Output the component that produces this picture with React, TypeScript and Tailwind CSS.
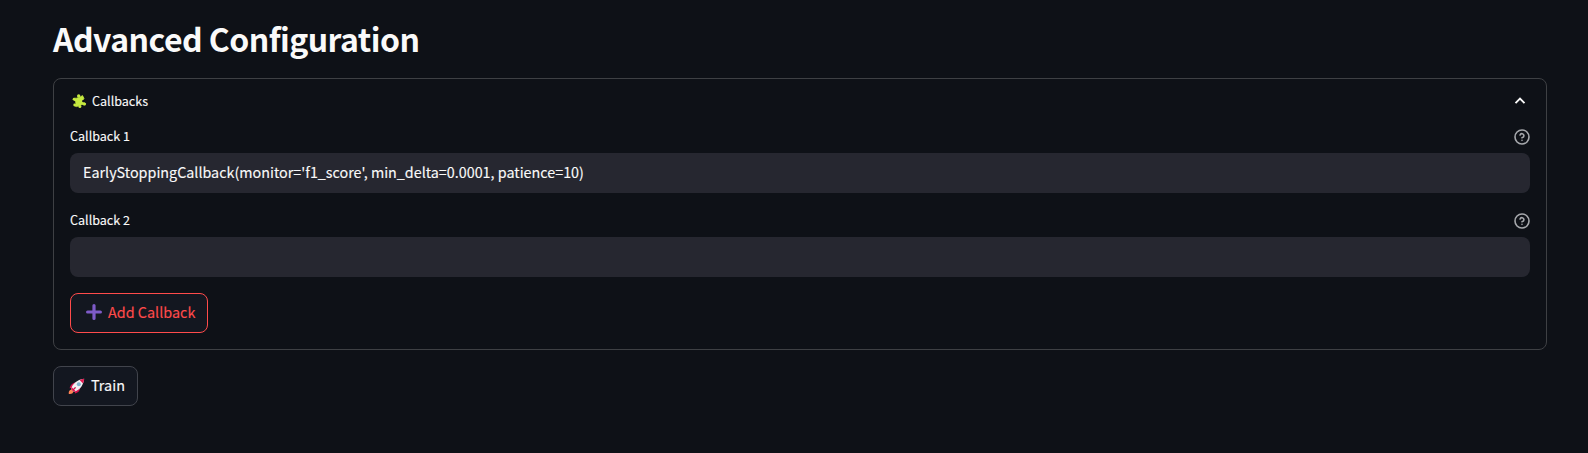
import { useState } from "react";

const FONT = "font-['Noto_Sans_CJK_SC','Noto_Sans',sans-serif]";

function PuzzleIcon() {
  return (
    <svg width="16" height="16" viewBox="0 0 16 16" className="shrink-0" aria-hidden="true">
      <g fill="#c5e93f">
        <path d="M8.800 4.300 11.500 2.600 13 5.400 11.600 7.400 12.200 9.200 14.500 10.600 13.600 12 11 11.400 9.600 12.300 5.400 13.600 4 13 5 10.800 4.200 9.200 2.600 5.200 5.400 5.200 7 4.800Z" stroke="#c5e93f" strokeWidth=".8" strokeLinejoin="round" />
        <circle cx="7.700" cy="2.900" r="1.700" />
        <circle cx="2.900" cy="6.200" r="1.200" />
        <circle cx="3.700" cy="12" r="1.400" />
        <circle cx="8.900" cy="13.500" r="1.500" />
        <circle cx="13.500" cy="11" r="1.500" />
      </g>
      <circle cx="12.200" cy="8.200" r="1.100" fill="#0e1117" />
      <circle cx="3.300" cy="9" r="1.100" fill="#0e1117" />
    </svg>
  );
}

function PlusIcon() {
  return (
    <svg width="16" height="16" viewBox="0 0 16 16" className="shrink-0" aria-hidden="true">
      <path d="M8 1.600v12.800M1.600 8h12.800" stroke="#7e5bc8" strokeWidth="3.200" strokeLinecap="round" />
    </svg>
  );
}

function RocketIcon() {
  return (
    <svg width="17" height="17" viewBox="0 0 17 17" className="shrink-0" aria-hidden="true">
      <path d="M.8 16c-.4-2.200.5-3.900 2.700-4.400l2 2C5 15.600 3.200 16.400.8 16Z" fill="#ff8253" />
      <path d="M7.600 4.600C4.600 4.800 2.200 7 1.600 10.200l3.900-.6ZM12.400 9.400c-.2 3-2.400 5.400-5.600 6l.6-3.900Z" fill="#d3104c" />
      <path d="M3.200 11.200C4.200 6.200 8.600 1.800 16.200.8 15.200 8.400 10.800 12.800 5.800 13.800Z" fill="#f1eff3" />
      <path d="M16.200.8c-1.700.200-3.300.600-4.600 1.200l3.400 3.400c.6-1.400 1-2.900 1.200-4.600ZM3.200 11.200l2.600 2.600 2-.6-4-4Z" fill="#e3194f" />
      <circle cx="10.800" cy="6.200" r="2" fill="#83b4d0" />
      <path d="m5.400 11.600 1.800-1.800" stroke="#d3104c" strokeWidth="1.300" strokeLinecap="round" />
    </svg>
  );
}

function HelpIcon() {
  return (
    <svg width="16" height="16" viewBox="0 0 24 24" fill="none" stroke="#a6a8ac" strokeWidth="2.400" strokeLinecap="round" strokeLinejoin="round" aria-hidden="true">
      <circle cx="12" cy="12" r="10.500" />
      <path d="M9.090 9a3 3 0 0 1 5.830 1c0 2-3 3-3 3M12 17h.01" />
    </svg>
  );
}

function TextField({ label, initial }: { label: string; initial: string }) {
  const [value, setValue] = useState(initial);
  return (
    <label className="flex flex-col">
      <span className="mb-1 flex h-6 items-center justify-between text-[12.550px] leading-6">
        <span className="-mt-[2px]">{label}</span>
        <HelpIcon />
      </span>
      <input
        className="h-10 w-full rounded-lg bg-[#262730] px-[13px] pb-[3px] text-[14.330px] outline-none"
        value={value}
        onChange={(e) => setValue(e.target.value)}
      />
    </label>
  );
}

export default function App() {
  const [open, setOpen] = useState(true);
  return (
    <main className={`${FONT} h-[453px] overflow-hidden bg-[#0e1117] pl-[53px] pr-[41px] pt-[17px] text-[#fafafa] [-webkit-text-stroke:0.12px]`}>
      <h1 className="h-[61px] text-[32px] font-bold leading-[43px] tracking-[-0.54px] [-webkit-text-stroke:0px]">Advanced Configuration</h1>
      <section className="h-[272px] rounded-lg border border-[#3e4044] px-4">
        <button onClick={() => setOpen(!open)} className="flex h-[46px] w-full items-center pb-[2px] text-[12.550px]">
          <span className="flex grow items-center gap-[5px] pl-[1px]">
            <PuzzleIcon />
            <span>Callbacks</span>
          </span>
          <svg width="12" height="8" viewBox="0 0 12 8" className="mr-1" fill="none" stroke="#fafafa" strokeWidth="1.900" aria-hidden="true">
            <path d="m1.500 6.200 4.500-4.500 4.500 4.500" />
          </svg>
        </button>
        {open && (
          <div className="flex flex-col gap-4">
            <TextField label="Callback 1" initial="EarlyStoppingCallback(monitor='f1_score', min_delta=0.0001, patience=10)" />
            <TextField label="Callback 2" initial="" />
            <button className="flex h-10 w-[138px] items-center gap-[6px] rounded-lg border border-[#ff4b4b] bg-[#131720] pb-[2px] pl-[15px] text-[14.400px] text-[#ff4b4b]">
              <PlusIcon />
              <span className="whitespace-nowrap">Add Callback</span>
            </button>
          </div>
        )}
      </section>
      <button className="mt-4 flex h-10 w-[85px] items-center gap-[6px] rounded-lg border border-[#41444c] bg-[#131720] pl-[14px] text-[14.400px]">
        <RocketIcon />
        <span className="-mt-[2px]">Train</span>
      </button>
    </main>
  );
}
